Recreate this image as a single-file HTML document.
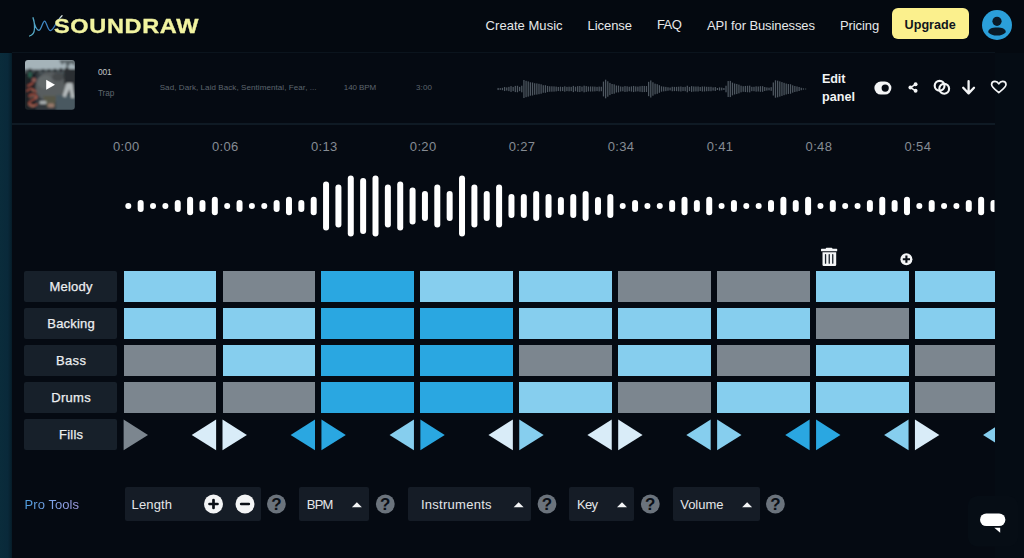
<!DOCTYPE html>
<html lang="en"><head><meta charset="utf-8"><title>SOUNDRAW</title>
<style>
html,body{margin:0;padding:0;}
body{width:1024px;height:558px;overflow:hidden;background:#040910;position:relative;font-family:"Liberation Sans",sans-serif;}
.t{position:absolute;line-height:1;white-space:nowrap;}
.abs{position:absolute;}
.lbl{position:absolute;left:24.2px;width:93.3px;height:31px;background:#17202a;border-radius:2px;}
.cell{position:absolute;width:92.5px;height:31px;}
.L{background:#86ceee;}
.G{background:#7c868f;}
.M{background:#2aa7e1;}
.box{position:absolute;top:487.4px;height:33.8px;background:#151c26;border-radius:2px;}
svg{position:absolute;overflow:visible;}
</style></head><body>

<div class="abs" style="left:0;top:0;width:1024px;height:52.5px;background:#040910;"></div>
<div class="abs" style="left:0;top:52.5px;width:12.5px;height:506px;background:linear-gradient(90deg,#0a2c3b 0%,#09293a 60%,#07202d 85%,#06141f 100%);"></div>
<div class="abs" style="left:12px;top:52.5px;width:982.5px;height:506px;background:#050a12;"></div>
<div class="abs" style="left:994.5px;top:52.5px;width:29.5px;height:506px;background:#050c14;"></div>
<div class="abs" style="left:12px;top:123px;width:982.5px;height:1.5px;background:#0f1a24;"></div>
<div class="abs" style="left:12px;top:52px;width:982.5px;height:1px;background:#0b141d;"></div>
<svg style="left:0;top:0" width="70" height="50" viewBox="0 0 70 50"><defs><linearGradient id="lg" x1="29" y1="0" x2="62" y2="0" gradientUnits="userSpaceOnUse"><stop offset="0" stop-color="#5db4c4"/><stop offset="0.45" stop-color="#3d86c6"/><stop offset="0.8" stop-color="#3a78b8"/><stop offset="1" stop-color="#e8f0e8"/></linearGradient></defs><path d="M29.5 36 C32.6 35.2,34.4 32.5,34.5 28.5 C34.6 24.5,34 20,33 17.7 C34 21,35 30.3,38.8 30.3 C41.4 30.3,42.6 21,44.6 21 C46.4 21,47.6 30.6,50.5 30.6 C53.6 30.6,56.5 20.5,62 15.7" fill="none" stroke="url(#lg)" stroke-width="1.25" stroke-linecap="round" stroke-linejoin="round"/></svg>
<span class="t " style="left:53.90px;top:15.02px;font-size:21px;letter-spacing:0.585px;color:#f1f3a0;font-weight:700;-webkit-text-stroke:0.35px #f1f3a0;transform:scaleX(1.12);transform-origin:0 0;">SOUNDRAW</span>
<span class="t " style="left:485.60px;top:18.70px;font-size:13px;letter-spacing:0.038px;color:#e6e8ea;">Create Music</span>
<span class="t " style="left:587.50px;top:18.70px;font-size:13px;letter-spacing:-0.052px;color:#e6e8ea;">License</span>
<span class="t " style="left:657.00px;top:18.40px;font-size:13px;letter-spacing:-0.604px;color:#e6e8ea;">FAQ</span>
<span class="t " style="left:707.00px;top:18.70px;font-size:13px;letter-spacing:-0.114px;color:#e6e8ea;">API for Businesses</span>
<span class="t " style="left:840.00px;top:18.70px;font-size:13px;letter-spacing:-0.090px;color:#e6e8ea;">Pricing</span>
<div class="abs" style="left:892px;top:8px;width:77px;height:31px;background:#fbf08d;border-radius:6px;"></div>
<span class="t " style="left:904.60px;top:18.83px;font-size:12.6px;letter-spacing:0.015px;color:#10151c;font-weight:700;">Upgrade</span>
<svg style="left:981.5px;top:9.5px" width="30" height="30" viewBox="0 0 30 30"><circle cx="15" cy="15" r="15" fill="#2b9fd9"/><circle cx="15" cy="11.3" r="4.6" fill="#0a1a26"/><path d="M6.2 22.2 C6.2 18.8,10 17.6,15 17.6 C20 17.6,23.8 18.8,23.8 22.2 C21.8 24.6,18.6 25.6,15 25.6 C11.4 25.6,8.2 24.6,6.2 22.2Z" fill="#0a1a26"/></svg>
<svg style="left:24.5px;top:59.5px" width="50" height="50" viewBox="0 0 50 50">
<defs><clipPath id="tc"><rect x="0" y="0" width="49.8" height="49.8" rx="3"/></clipPath><filter id="bl" x="-10%" y="-10%" width="120%" height="120%"><feGaussianBlur stdDeviation="1.0"/></filter></defs>
<g clip-path="url(#tc)"><g filter="url(#bl)">
<rect x="-3" y="-3" width="56" height="56" fill="#32383c"/>
<rect x="-3" y="-3" width="56" height="13.5" fill="#a5b3b9"/>
<path d="M34 0 L37 5 L40 2 L42 8 L46 3 L50 6 L50 0Z" fill="#596266"/>
<rect x="-3" y="9.5" width="56" height="5" fill="#4a5256"/>
<g fill="#2c3135"><circle cx="5" cy="11" r="2.6"/><circle cx="11.5" cy="12.5" r="2.4"/><circle cx="18" cy="10.5" r="1.8"/><circle cx="24" cy="10.5" r="1.8"/><circle cx="30" cy="10.5" r="2"/><circle cx="36" cy="10" r="2"/><circle cx="42" cy="9.5" r="2.2"/></g>
<rect x="-2" y="13" width="13" height="40" fill="#1f2327"/>
<rect x="3.2" y="12" width="3.6" height="5.5" rx="1.5" fill="#2b5f4f"/>
<ellipse cx="26" cy="27" rx="15.5" ry="15" fill="#585d5f"/>
<ellipse cx="20" cy="22" rx="8" ry="7" fill="#626769"/>
<ellipse cx="33" cy="17" rx="6" ry="4" fill="#44494c"/>
<rect x="39" y="9" width="12" height="15" fill="#2a2e31"/>
<rect x="31" y="35" width="22" height="18" fill="#495960"/>
<path d="M41.5 23 L47.5 23 L49.5 38 L46 38 L44.6 29 L40.5 37.5 L37.5 36Z" fill="#b4babb"/>
<path d="M18 36 L31 36 L30 47 L22 47Z" fill="#575646"/>
<rect x="14.5" y="41" width="7" height="3" rx="1" fill="#a9afb0"/>
<rect x="23" y="43.5" width="6" height="4" rx="1" fill="#9a7a6c"/>
<g fill="none" stroke="#b55442" stroke-width="1.5" opacity="0.9" stroke-linecap="round"><path d="M3 26 L8 23 M2 31 C5 27,9 29,11 32 M4 36 C7 33,11 34,12 37 C10 40,5 40,4 43 C6 46,10 46,12 44"/></g>
<g fill="none" stroke="#e09a80" stroke-width="0.9" opacity="0.85" stroke-linecap="round"><path d="M5 38 C7 36,10 36,11 38 M3.5 44.5 C5 46.5,8 47,10 46 M7 30 L9 31.5"/></g>
<circle cx="9" cy="20" r="2.2" fill="#8c5a52"/>
</g>
<path d="M21.2 19.7 L30 24.7 L21.2 29.7Z" fill="#ffffff"/>
</g></svg>
<span class="t " style="left:98.00px;top:67.69px;font-size:8.4px;letter-spacing:-0.158px;color:#c0c4c8;">001</span>
<span class="t " style="left:98.00px;top:90.46px;font-size:8.2px;letter-spacing:-0.086px;color:#5f666e;">Trap</span>
<span class="t " style="left:159.70px;top:83.83px;font-size:8px;letter-spacing:0.081px;color:#5d656e;">Sad, Dark, Laid Back, Sentimental, Fear, ...</span>
<span class="t " style="left:343.75px;top:83.83px;font-size:8px;letter-spacing:-0.068px;color:#5d656e;">140 BPM</span>
<span class="t " style="left:416.00px;top:83.83px;font-size:8px;letter-spacing:0.143px;color:#5d656e;">3:00</span>
<svg style="left:0;top:0" width="1024" height="130" viewBox="0 0 1024 130"><g fill="#4e5760"><rect x="497.50" y="87.94" width="1.25" height="2.12"/><rect x="499.65" y="88.14" width="1.25" height="1.72"/><rect x="501.80" y="87.81" width="1.25" height="2.38"/><rect x="503.95" y="86.97" width="1.25" height="4.07"/><rect x="506.10" y="87.44" width="1.25" height="3.12"/><rect x="508.25" y="86.87" width="1.25" height="4.26"/><rect x="510.40" y="86.11" width="1.25" height="5.79"/><rect x="512.55" y="86.89" width="1.25" height="4.22"/><rect x="514.70" y="85.90" width="1.25" height="6.21"/><rect x="516.85" y="85.76" width="1.25" height="6.47"/><rect x="519.00" y="86.85" width="1.25" height="4.31"/><rect x="521.15" y="85.70" width="1.25" height="6.60"/><rect x="523.30" y="79.98" width="1.25" height="18.05"/><rect x="525.45" y="80.82" width="1.25" height="16.37"/><rect x="527.60" y="81.39" width="1.25" height="15.23"/><rect x="529.75" y="82.28" width="1.25" height="13.43"/><rect x="531.90" y="82.50" width="1.25" height="13.00"/><rect x="534.05" y="83.22" width="1.25" height="11.56"/><rect x="536.20" y="83.41" width="1.25" height="11.18"/><rect x="538.35" y="83.80" width="1.25" height="10.39"/><rect x="540.50" y="84.28" width="1.25" height="9.45"/><rect x="542.65" y="85.24" width="1.25" height="7.53"/><rect x="544.80" y="85.19" width="1.25" height="7.61"/><rect x="546.95" y="85.92" width="1.25" height="6.16"/><rect x="549.10" y="86.29" width="1.25" height="5.43"/><rect x="551.25" y="86.30" width="1.25" height="5.40"/><rect x="553.40" y="86.37" width="1.25" height="5.25"/><rect x="555.55" y="86.60" width="1.25" height="4.80"/><rect x="557.70" y="86.94" width="1.25" height="4.12"/><rect x="559.85" y="86.68" width="1.25" height="4.64"/><rect x="562.00" y="86.91" width="1.25" height="4.17"/><rect x="564.15" y="86.30" width="1.25" height="5.41"/><rect x="566.30" y="86.87" width="1.25" height="4.25"/><rect x="568.45" y="86.68" width="1.25" height="4.64"/><rect x="570.60" y="86.84" width="1.25" height="4.31"/><rect x="572.75" y="85.89" width="1.25" height="6.22"/><rect x="574.90" y="86.72" width="1.25" height="4.55"/><rect x="577.05" y="86.17" width="1.25" height="5.67"/><rect x="579.20" y="85.98" width="1.25" height="6.05"/><rect x="581.35" y="86.63" width="1.25" height="4.73"/><rect x="583.50" y="85.68" width="1.25" height="6.64"/><rect x="585.65" y="86.11" width="1.25" height="5.78"/><rect x="587.80" y="86.54" width="1.25" height="4.92"/><rect x="589.95" y="86.44" width="1.25" height="5.13"/><rect x="592.10" y="86.50" width="1.25" height="5.00"/><rect x="594.25" y="86.60" width="1.25" height="4.79"/><rect x="596.40" y="86.87" width="1.25" height="4.25"/><rect x="598.55" y="86.59" width="1.25" height="4.82"/><rect x="600.70" y="86.74" width="1.25" height="4.51"/><rect x="602.85" y="81.58" width="1.25" height="14.85"/><rect x="605.00" y="79.69" width="1.25" height="18.63"/><rect x="607.15" y="81.28" width="1.25" height="15.43"/><rect x="609.30" y="82.91" width="1.25" height="12.19"/><rect x="611.45" y="83.99" width="1.25" height="10.02"/><rect x="613.60" y="84.32" width="1.25" height="9.37"/><rect x="615.75" y="85.48" width="1.25" height="7.03"/><rect x="617.90" y="85.63" width="1.25" height="6.73"/><rect x="620.05" y="86.48" width="1.25" height="5.04"/><rect x="622.20" y="86.72" width="1.25" height="4.56"/><rect x="624.35" y="86.09" width="1.25" height="5.83"/><rect x="626.50" y="86.32" width="1.25" height="5.37"/><rect x="628.65" y="86.75" width="1.25" height="4.50"/><rect x="630.80" y="86.38" width="1.25" height="5.23"/><rect x="632.95" y="85.92" width="1.25" height="6.15"/><rect x="635.10" y="86.44" width="1.25" height="5.12"/><rect x="637.25" y="86.58" width="1.25" height="4.84"/><rect x="639.40" y="86.25" width="1.25" height="5.50"/><rect x="641.55" y="85.90" width="1.25" height="6.21"/><rect x="643.70" y="85.92" width="1.25" height="6.15"/><rect x="645.85" y="86.03" width="1.25" height="5.94"/><rect x="648.00" y="81.84" width="1.25" height="14.33"/><rect x="650.15" y="80.45" width="1.25" height="17.09"/><rect x="652.30" y="82.26" width="1.25" height="13.48"/><rect x="654.45" y="83.64" width="1.25" height="10.72"/><rect x="656.60" y="84.18" width="1.25" height="9.65"/><rect x="658.75" y="85.19" width="1.25" height="7.61"/><rect x="660.90" y="86.31" width="1.25" height="5.38"/><rect x="663.05" y="86.60" width="1.25" height="4.80"/><rect x="665.20" y="86.87" width="1.25" height="4.26"/><rect x="667.35" y="87.25" width="1.25" height="3.50"/><rect x="669.50" y="87.56" width="1.25" height="2.87"/><rect x="671.65" y="86.75" width="1.25" height="4.50"/><rect x="673.80" y="86.86" width="1.25" height="4.27"/><rect x="675.95" y="86.84" width="1.25" height="4.31"/><rect x="678.10" y="86.67" width="1.25" height="4.65"/><rect x="680.25" y="86.48" width="1.25" height="5.04"/><rect x="682.40" y="86.92" width="1.25" height="4.16"/><rect x="684.55" y="86.80" width="1.25" height="4.39"/><rect x="686.70" y="85.74" width="1.25" height="6.53"/><rect x="688.85" y="86.90" width="1.25" height="4.21"/><rect x="691.00" y="86.12" width="1.25" height="5.77"/><rect x="693.15" y="86.43" width="1.25" height="5.15"/><rect x="695.30" y="86.54" width="1.25" height="4.92"/><rect x="697.45" y="86.47" width="1.25" height="5.05"/><rect x="699.60" y="86.97" width="1.25" height="4.06"/><rect x="701.75" y="86.50" width="1.25" height="5.01"/><rect x="703.90" y="86.52" width="1.25" height="4.96"/><rect x="706.05" y="86.76" width="1.25" height="4.48"/><rect x="708.20" y="86.83" width="1.25" height="4.34"/><rect x="710.35" y="86.77" width="1.25" height="4.46"/><rect x="712.50" y="87.39" width="1.25" height="3.23"/><rect x="714.65" y="86.98" width="1.25" height="4.04"/><rect x="716.80" y="87.98" width="1.25" height="2.03"/><rect x="718.95" y="87.38" width="1.25" height="3.24"/><rect x="721.10" y="87.61" width="1.25" height="2.77"/><rect x="723.25" y="87.98" width="1.25" height="2.03"/><rect x="725.40" y="85.72" width="1.25" height="6.56"/><rect x="727.55" y="81.04" width="1.25" height="15.92"/><rect x="729.70" y="80.91" width="1.25" height="16.17"/><rect x="731.85" y="82.62" width="1.25" height="12.77"/><rect x="734.00" y="83.51" width="1.25" height="10.98"/><rect x="736.15" y="83.94" width="1.25" height="10.13"/><rect x="738.30" y="84.63" width="1.25" height="8.73"/><rect x="740.45" y="85.68" width="1.25" height="6.64"/><rect x="742.60" y="86.22" width="1.25" height="5.56"/><rect x="744.75" y="85.94" width="1.25" height="6.12"/><rect x="746.90" y="85.78" width="1.25" height="6.45"/><rect x="749.05" y="85.64" width="1.25" height="6.71"/><rect x="751.20" y="86.80" width="1.25" height="4.39"/><rect x="753.35" y="86.77" width="1.25" height="4.45"/><rect x="755.50" y="86.36" width="1.25" height="5.28"/><rect x="757.65" y="86.50" width="1.25" height="5.00"/><rect x="759.80" y="86.19" width="1.25" height="5.62"/><rect x="761.95" y="86.16" width="1.25" height="5.68"/><rect x="764.10" y="87.00" width="1.25" height="4.00"/><rect x="766.25" y="87.42" width="1.25" height="3.16"/><rect x="768.40" y="87.67" width="1.25" height="2.67"/><rect x="770.55" y="87.17" width="1.25" height="3.66"/><rect x="772.70" y="82.47" width="1.25" height="13.06"/><rect x="774.85" y="80.28" width="1.25" height="17.44"/><rect x="777.00" y="80.67" width="1.25" height="16.66"/><rect x="779.15" y="81.37" width="1.25" height="15.26"/><rect x="781.30" y="82.08" width="1.25" height="13.85"/><rect x="783.45" y="82.82" width="1.25" height="12.36"/><rect x="785.60" y="83.54" width="1.25" height="10.92"/><rect x="787.75" y="84.04" width="1.25" height="9.91"/><rect x="789.90" y="84.23" width="1.25" height="9.53"/><rect x="792.05" y="85.32" width="1.25" height="7.36"/><rect x="794.20" y="86.00" width="1.25" height="6.00"/><rect x="796.35" y="86.46" width="1.25" height="5.07"/><rect x="798.50" y="86.99" width="1.25" height="4.01"/><rect x="800.65" y="87.76" width="1.25" height="2.47"/><rect x="802.80" y="88.36" width="1.25" height="1.29"/><rect x="804.95" y="88.60" width="1.25" height="0.80"/></g></svg>
<span class="t " style="left:821.90px;top:72.93px;font-size:12.6px;letter-spacing:-0.066px;color:#f2f3f4;font-weight:700;">Edit</span>
<span class="t " style="left:821.90px;top:91.33px;font-size:12.6px;letter-spacing:0.048px;color:#f2f3f4;font-weight:700;">panel</span>
<svg style="left:870px;top:76px" width="144" height="24" viewBox="870 76 144 24">
<rect x="874.4" y="81.6" width="17" height="13" rx="6.5" fill="#f4f5f6"/><circle cx="885.2" cy="88.1" r="3.6" fill="#050a12"/>
<g fill="#f4f5f6"><circle cx="915.6" cy="84.3" r="1.95"/><circle cx="910.4" cy="87.5" r="1.95"/><circle cx="915.6" cy="90.8" r="1.95"/></g>
<path d="M915.6 84.3 L910.4 87.5 L915.6 90.8" fill="none" stroke="#f4f5f6" stroke-width="1.5"/>
<circle cx="939.6" cy="85.8" r="4.9" fill="none" stroke="#f4f5f6" stroke-width="2.15"/>
<circle cx="944.2" cy="88.8" r="4.9" fill="none" stroke="#f4f5f6" stroke-width="2.15"/>
<path d="M968.6 81.2 L968.6 93 M963.2 87.8 L968.6 93.4 L974 87.8" fill="none" stroke="#f4f5f6" stroke-width="2.3" stroke-linecap="round" stroke-linejoin="round"/>
<path d="M998.8 92.6 C995 89.6,991.6 87.4,991.6 84.6 C991.6 82.6,993.2 81.4,995 81.4 C996.6 81.4,998 82.4,998.8 83.8 C999.6 82.4,1001 81.4,1002.6 81.4 C1004.4 81.4,1006 82.6,1006 84.6 C1006 87.4,1002.6 89.6,998.8 92.6Z" fill="none" stroke="#f4f5f6" stroke-width="1.7" stroke-linejoin="round"/>
</svg>
<span class="t " style="left:113.00px;top:139.80px;font-size:13px;letter-spacing:0.000px;color:#868c94;letter-spacing:0.35px;">0:00</span>
<span class="t " style="left:211.94px;top:139.80px;font-size:13px;letter-spacing:0.000px;color:#868c94;letter-spacing:0.35px;">0:06</span>
<span class="t " style="left:310.88px;top:139.80px;font-size:13px;letter-spacing:0.000px;color:#868c94;letter-spacing:0.35px;">0:13</span>
<span class="t " style="left:409.82px;top:139.80px;font-size:13px;letter-spacing:0.000px;color:#868c94;letter-spacing:0.35px;">0:20</span>
<span class="t " style="left:508.76px;top:139.80px;font-size:13px;letter-spacing:0.000px;color:#868c94;letter-spacing:0.35px;">0:27</span>
<span class="t " style="left:607.70px;top:139.80px;font-size:13px;letter-spacing:0.000px;color:#868c94;letter-spacing:0.35px;">0:34</span>
<span class="t " style="left:706.64px;top:139.80px;font-size:13px;letter-spacing:0.000px;color:#868c94;letter-spacing:0.35px;">0:41</span>
<span class="t " style="left:805.58px;top:139.80px;font-size:13px;letter-spacing:0.000px;color:#868c94;letter-spacing:0.35px;">0:48</span>
<span class="t " style="left:904.52px;top:139.80px;font-size:13px;letter-spacing:0.000px;color:#868c94;letter-spacing:0.35px;">0:54</span>
<svg style="left:0;top:160px" width="994.5" height="90" viewBox="0 160 994.5 90"><defs><clipPath id="wc"><rect x="0" y="160" width="994.5" height="90"/></clipPath></defs><g fill="#ffffff" clip-path="url(#wc)"><rect x="125.30" y="202.90" width="6" height="6" rx="3"/><rect x="137.66" y="199.90" width="6" height="12" rx="3"/><rect x="150.02" y="202.90" width="6" height="6" rx="3"/><rect x="162.38" y="202.90" width="6" height="6" rx="3"/><rect x="174.74" y="199.90" width="6" height="12" rx="3"/><rect x="187.10" y="196.65" width="6" height="18.5" rx="3"/><rect x="199.46" y="199.90" width="6" height="12" rx="3"/><rect x="211.82" y="196.65" width="6" height="18.5" rx="3"/><rect x="224.18" y="202.90" width="6" height="6" rx="3"/><rect x="236.54" y="199.90" width="6" height="12" rx="3"/><rect x="248.90" y="202.90" width="6" height="6" rx="3"/><rect x="261.26" y="202.90" width="6" height="6" rx="3"/><rect x="273.62" y="199.90" width="6" height="12" rx="3"/><rect x="285.98" y="196.65" width="6" height="18.5" rx="3"/><rect x="298.34" y="199.90" width="6" height="12" rx="3"/><rect x="310.70" y="196.65" width="6" height="18.5" rx="3"/><rect x="323.06" y="181.40" width="6" height="49" rx="3"/><rect x="335.42" y="184.40" width="6" height="43" rx="3"/><rect x="347.78" y="175.40" width="6" height="61" rx="3"/><rect x="360.14" y="177.90" width="6" height="56" rx="3"/><rect x="372.50" y="175.40" width="6" height="61" rx="3"/><rect x="384.86" y="184.40" width="6" height="43" rx="3"/><rect x="397.22" y="181.40" width="6" height="49" rx="3"/><rect x="409.58" y="187.40" width="6" height="37" rx="3"/><rect x="421.94" y="190.90" width="6" height="30" rx="3"/><rect x="434.30" y="184.40" width="6" height="43" rx="3"/><rect x="446.66" y="190.90" width="6" height="30" rx="3"/><rect x="459.02" y="175.40" width="6" height="61" rx="3"/><rect x="471.38" y="184.40" width="6" height="43" rx="3"/><rect x="483.74" y="190.90" width="6" height="30" rx="3"/><rect x="496.10" y="184.40" width="6" height="43" rx="3"/><rect x="508.46" y="193.90" width="6" height="24" rx="3"/><rect x="520.82" y="193.90" width="6" height="24" rx="3"/><rect x="533.18" y="190.90" width="6" height="30" rx="3"/><rect x="545.54" y="193.90" width="6" height="24" rx="3"/><rect x="557.90" y="196.90" width="6" height="18" rx="3"/><rect x="570.26" y="193.90" width="6" height="24" rx="3"/><rect x="582.62" y="190.90" width="6" height="30" rx="3"/><rect x="594.98" y="196.90" width="6" height="18" rx="3"/><rect x="607.34" y="193.90" width="6" height="24" rx="3"/><rect x="619.70" y="202.90" width="6" height="6" rx="3"/><rect x="632.06" y="199.90" width="6" height="12" rx="3"/><rect x="644.42" y="202.90" width="6" height="6" rx="3"/><rect x="656.78" y="202.90" width="6" height="6" rx="3"/><rect x="669.14" y="199.90" width="6" height="12" rx="3"/><rect x="681.50" y="196.65" width="6" height="18.5" rx="3"/><rect x="693.86" y="199.90" width="6" height="12" rx="3"/><rect x="706.22" y="196.65" width="6" height="18.5" rx="3"/><rect x="718.58" y="202.90" width="6" height="6" rx="3"/><rect x="730.94" y="199.90" width="6" height="12" rx="3"/><rect x="743.30" y="202.90" width="6" height="6" rx="3"/><rect x="755.66" y="202.90" width="6" height="6" rx="3"/><rect x="768.02" y="199.90" width="6" height="12" rx="3"/><rect x="780.38" y="196.65" width="6" height="18.5" rx="3"/><rect x="792.74" y="199.90" width="6" height="12" rx="3"/><rect x="805.10" y="196.65" width="6" height="18.5" rx="3"/><rect x="817.46" y="202.90" width="6" height="6" rx="3"/><rect x="829.82" y="199.90" width="6" height="12" rx="3"/><rect x="842.18" y="202.90" width="6" height="6" rx="3"/><rect x="854.54" y="202.90" width="6" height="6" rx="3"/><rect x="866.90" y="199.90" width="6" height="12" rx="3"/><rect x="879.26" y="196.65" width="6" height="18.5" rx="3"/><rect x="891.62" y="199.90" width="6" height="12" rx="3"/><rect x="903.98" y="196.65" width="6" height="18.5" rx="3"/><rect x="916.34" y="202.90" width="6" height="6" rx="3"/><rect x="928.70" y="199.90" width="6" height="12" rx="3"/><rect x="941.06" y="202.90" width="6" height="6" rx="3"/><rect x="953.42" y="202.90" width="6" height="6" rx="3"/><rect x="965.78" y="199.90" width="6" height="12" rx="3"/><rect x="978.14" y="196.65" width="6" height="18.5" rx="3"/><rect x="990.50" y="199.90" width="6" height="12" rx="3"/></g></svg>
<svg style="left:815px;top:244px" width="100" height="26" viewBox="815 244 100 26">
<g fill="#f4f5f6"><rect x="821" y="248.8" width="16.2" height="2.5" rx="0.6"/><rect x="825.8" y="247.8" width="6.6" height="2" rx="0.8"/>
<path d="M822.5 252.3 H836.2 V264.8 Q836.2 266 835 266 H823.7 Q822.5 266 822.5 264.8Z"/></g>
<g fill="#1a222b"><rect x="824.9" y="254.1" width="1.3" height="9.7" rx="0.6"/><rect x="828.6" y="254.1" width="1.3" height="9.7" rx="0.6"/><rect x="832.1" y="254.1" width="1.3" height="9.7" rx="0.6"/></g>
<circle cx="906.4" cy="259.2" r="6" fill="#f4f5f6"/><path d="M902.8 259.2 H910 M906.4 255.6 V262.8" stroke="#0a0f16" stroke-width="2.1" fill="none"/>
</svg>
<div class="abs" style="left:0;top:0;width:994.5px;height:558px;overflow:hidden;">
<div class="lbl" style="top:271.0px"></div>
<span class="t " style="left:49.55px;top:279.90px;font-size:13px;letter-spacing:0.200px;color:#eceef0;-webkit-text-stroke:0.25px #eceef0;">Melody</span>
<div class="cell L" style="left:123.60px;top:271.0px"></div>
<div class="cell G" style="left:222.52px;top:271.0px"></div>
<div class="cell M" style="left:321.44px;top:271.0px"></div>
<div class="cell L" style="left:420.36px;top:271.0px"></div>
<div class="cell L" style="left:519.28px;top:271.0px"></div>
<div class="cell G" style="left:618.20px;top:271.0px"></div>
<div class="cell G" style="left:717.12px;top:271.0px"></div>
<div class="cell L" style="left:816.04px;top:271.0px"></div>
<div class="cell L" style="left:914.96px;top:271.0px"></div>
<div class="lbl" style="top:308.08px"></div>
<span class="t " style="left:47.37px;top:316.98px;font-size:13px;letter-spacing:0.167px;color:#eceef0;-webkit-text-stroke:0.25px #eceef0;">Backing</span>
<div class="cell L" style="left:123.60px;top:308.08px"></div>
<div class="cell L" style="left:222.52px;top:308.08px"></div>
<div class="cell M" style="left:321.44px;top:308.08px"></div>
<div class="cell M" style="left:420.36px;top:308.08px"></div>
<div class="cell L" style="left:519.28px;top:308.08px"></div>
<div class="cell L" style="left:618.20px;top:308.08px"></div>
<div class="cell L" style="left:717.12px;top:308.08px"></div>
<div class="cell G" style="left:816.04px;top:308.08px"></div>
<div class="cell L" style="left:914.96px;top:308.08px"></div>
<div class="lbl" style="top:345.15999999999997px"></div>
<span class="t " style="left:56.05px;top:354.06px;font-size:13px;letter-spacing:0.333px;color:#eceef0;-webkit-text-stroke:0.25px #eceef0;">Bass</span>
<div class="cell G" style="left:123.60px;top:345.15999999999997px"></div>
<div class="cell L" style="left:222.52px;top:345.15999999999997px"></div>
<div class="cell M" style="left:321.44px;top:345.15999999999997px"></div>
<div class="cell M" style="left:420.36px;top:345.15999999999997px"></div>
<div class="cell G" style="left:519.28px;top:345.15999999999997px"></div>
<div class="cell L" style="left:618.20px;top:345.15999999999997px"></div>
<div class="cell G" style="left:717.12px;top:345.15999999999997px"></div>
<div class="cell L" style="left:816.04px;top:345.15999999999997px"></div>
<div class="cell G" style="left:914.96px;top:345.15999999999997px"></div>
<div class="lbl" style="top:382.24px"></div>
<span class="t " style="left:51.36px;top:391.14px;font-size:13px;letter-spacing:0.250px;color:#eceef0;-webkit-text-stroke:0.25px #eceef0;">Drums</span>
<div class="cell G" style="left:123.60px;top:382.24px"></div>
<div class="cell G" style="left:222.52px;top:382.24px"></div>
<div class="cell M" style="left:321.44px;top:382.24px"></div>
<div class="cell M" style="left:420.36px;top:382.24px"></div>
<div class="cell L" style="left:519.28px;top:382.24px"></div>
<div class="cell G" style="left:618.20px;top:382.24px"></div>
<div class="cell L" style="left:717.12px;top:382.24px"></div>
<div class="cell L" style="left:816.04px;top:382.24px"></div>
<div class="cell G" style="left:914.96px;top:382.24px"></div>
<div class="lbl" style="top:419.32px"></div>
<span class="t " style="left:58.95px;top:428.22px;font-size:13px;letter-spacing:0.250px;color:#eceef0;-webkit-text-stroke:0.25px #eceef0;">Fills</span>
<svg style="left:0;top:415px" width="1024" height="40" viewBox="0 415 1024 40"><path d="M123.60 419.5 L148.00 434.9 L123.60 450.3Z" fill="#7c868f"/><path d="M216.10 419.5 L191.70 434.9 L216.10 450.3Z" fill="#d9ecf8"/><path d="M222.52 419.5 L246.92 434.9 L222.52 450.3Z" fill="#d9ecf8"/><path d="M315.02 419.5 L290.62 434.9 L315.02 450.3Z" fill="#2aa7e1"/><path d="M321.44 419.5 L345.84 434.9 L321.44 450.3Z" fill="#2aa7e1"/><path d="M413.94 419.5 L389.54 434.9 L413.94 450.3Z" fill="#86ceee"/><path d="M420.36 419.5 L444.76 434.9 L420.36 450.3Z" fill="#2aa7e1"/><path d="M512.86 419.5 L488.46 434.9 L512.86 450.3Z" fill="#d9ecf8"/><path d="M519.28 419.5 L543.68 434.9 L519.28 450.3Z" fill="#86ceee"/><path d="M611.78 419.5 L587.38 434.9 L611.78 450.3Z" fill="#d9ecf8"/><path d="M618.20 419.5 L642.60 434.9 L618.20 450.3Z" fill="#d9ecf8"/><path d="M710.70 419.5 L686.30 434.9 L710.70 450.3Z" fill="#86ceee"/><path d="M717.12 419.5 L741.52 434.9 L717.12 450.3Z" fill="#86ceee"/><path d="M809.62 419.5 L785.22 434.9 L809.62 450.3Z" fill="#2aa7e1"/><path d="M816.04 419.5 L840.44 434.9 L816.04 450.3Z" fill="#2aa7e1"/><path d="M908.54 419.5 L884.14 434.9 L908.54 450.3Z" fill="#86ceee"/><path d="M914.96 419.5 L939.36 434.9 L914.96 450.3Z" fill="#d9ecf8"/><path d="M1007.46 419.5 L983.06 434.9 L1007.46 450.3Z" fill="#86ceee"/></svg>
</div>
<span class="t " style="left:24.60px;top:498.30px;font-size:13px;letter-spacing:0.055px;color:#6aa6e6;background:linear-gradient(90deg,#4f9fe0,#a9a3ea);-webkit-background-clip:text;background-clip:text;color:transparent;">Pro Tools</span>
<div class="box" style="left:125px;width:136.0px"></div>
<div class="box" style="left:299.2px;width:70.2px"></div>
<div class="box" style="left:407.5px;width:123.5px"></div>
<div class="box" style="left:569px;width:65.0px"></div>
<div class="box" style="left:672.5px;width:87.5px"></div>
<span class="t " style="left:131.50px;top:498.30px;font-size:13px;letter-spacing:0.147px;color:#e4e6e9;">Length</span>
<span class="t " style="left:306.80px;top:498.30px;font-size:13px;letter-spacing:-0.836px;color:#e4e6e9;">BPM</span>
<span class="t " style="left:421.00px;top:498.30px;font-size:13px;letter-spacing:0.259px;color:#e4e6e9;">Instruments</span>
<span class="t " style="left:577.00px;top:498.30px;font-size:13px;letter-spacing:-0.701px;color:#e4e6e9;">Key</span>
<span class="t " style="left:680.20px;top:498.30px;font-size:13px;letter-spacing:-0.013px;color:#e4e6e9;">Volume</span>
<svg style="left:0;top:480px" width="1024" height="78" viewBox="0 480 1024 78"><circle cx="213.5" cy="504" r="9.5" fill="#f4f5f6"/><path d="M209.5 504 H217.5 M213.5 500 V508" stroke="#0a0f16" stroke-width="2.7" stroke-linecap="round" fill="none"/><circle cx="245" cy="504" r="9.5" fill="#f4f5f6"/><path d="M241.2 504 H248.8" stroke="#0a0f16" stroke-width="2.7" stroke-linecap="round" fill="none"/><path d="M351.9 507.3 L356.9 502.3 L361.9 507.3Z" fill="#f4f5f6"/><path d="M513.6 507.3 L518.6 502.3 L523.6 507.3Z" fill="#f4f5f6"/><path d="M617 507.3 L622 502.3 L627 507.3Z" fill="#f4f5f6"/><path d="M742.1 507.3 L747.1 502.3 L752.1 507.3Z" fill="#f4f5f6"/><circle cx="276.4" cy="504" r="9.4" fill="#6b737c"/><text x="276.4" y="510.1" text-anchor="middle" font-family="Liberation Sans, sans-serif" font-weight="700" font-size="17" fill="#0a0f16">?</text><circle cx="385.3" cy="504" r="9.4" fill="#6b737c"/><text x="385.3" y="510.1" text-anchor="middle" font-family="Liberation Sans, sans-serif" font-weight="700" font-size="17" fill="#0a0f16">?</text><circle cx="547" cy="504" r="9.4" fill="#6b737c"/><text x="547" y="510.1" text-anchor="middle" font-family="Liberation Sans, sans-serif" font-weight="700" font-size="17" fill="#0a0f16">?</text><circle cx="650.3" cy="504" r="9.4" fill="#6b737c"/><text x="650.3" y="510.1" text-anchor="middle" font-family="Liberation Sans, sans-serif" font-weight="700" font-size="17" fill="#0a0f16">?</text><circle cx="775.4" cy="504" r="9.4" fill="#6b737c"/><text x="775.4" y="510.1" text-anchor="middle" font-family="Liberation Sans, sans-serif" font-weight="700" font-size="17" fill="#0a0f16">?</text><rect x="968" y="496" width="50" height="50.5" rx="9" fill="#060d15"/><rect x="980" y="513.5" width="25.4" height="12.6" rx="6.3" fill="#ffffff"/><path d="M994.3 527.7 H1000.2 V532.8Z" fill="#ffffff"/></svg>
</body></html>
